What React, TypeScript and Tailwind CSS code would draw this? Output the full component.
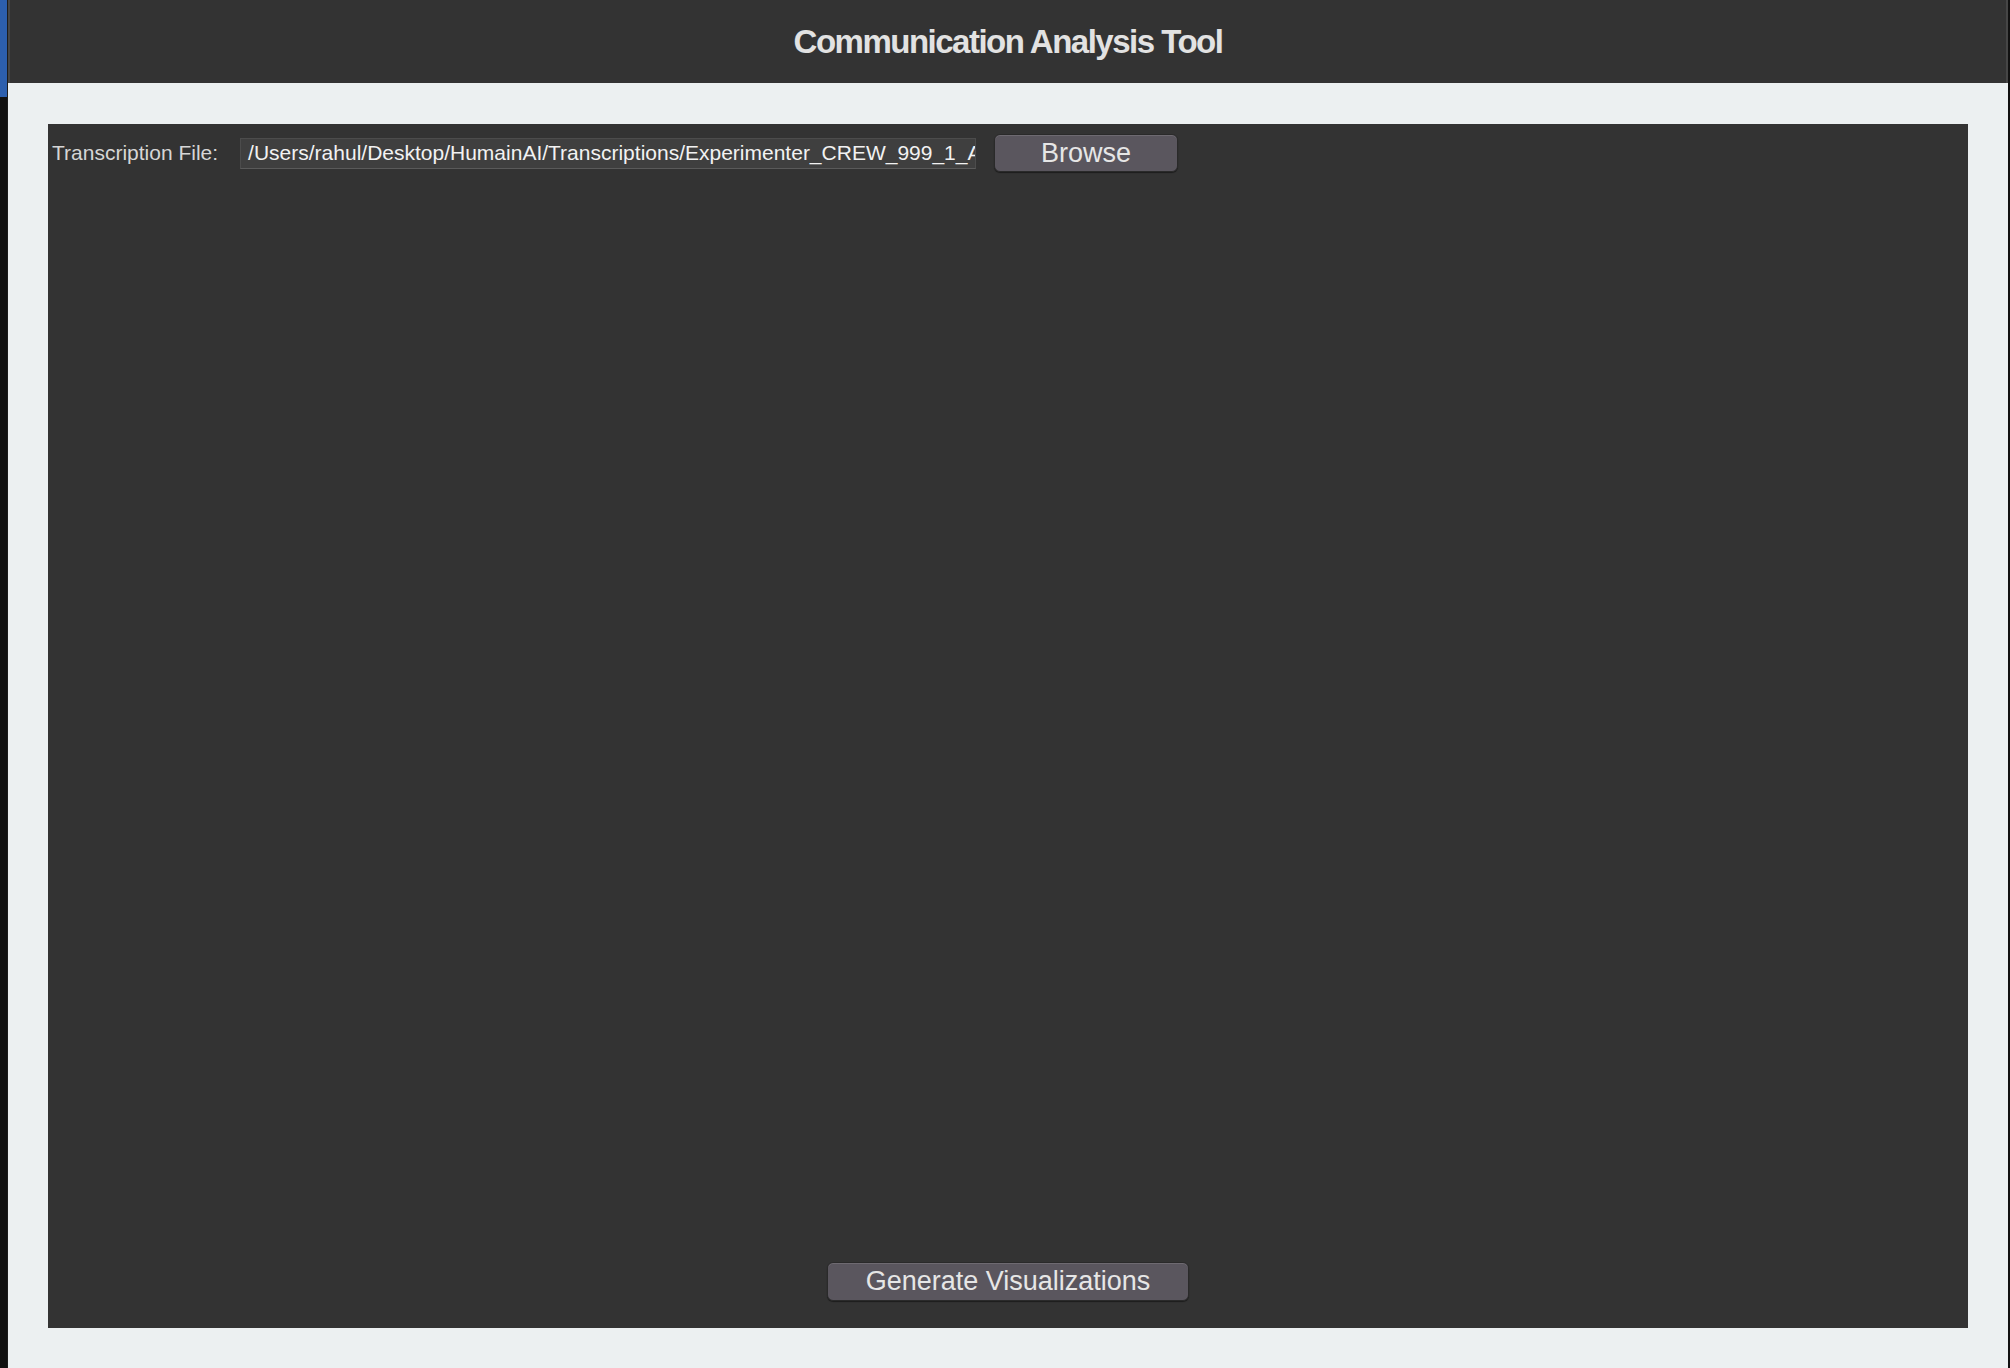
import React from "react";

const filePath = "/Users/rahul/Desktop/HumainAI/Transcriptions/Experimenter_CREW_999_1_Audio.txt";

function MacButton({ label, className }: { label: string; className: string }) {
  return (
    <button
      className={`flex items-center justify-center rounded-[6px] border border-[#2a2a2a] bg-[#5a565e] text-[27px] leading-none text-[#e6e6e6] shadow-[inset_0_1px_0_rgba(255,255,255,0.12),0_1px_1px_rgba(0,0,0,0.45)] ${className}`}
      style={{ fontFamily: '"Liberation Sans", Arial, sans-serif' }}
    >
      {label}
    </button>
  );
}

export default function App() {
  return (
    <div
      className="flex h-[1368px] w-[2010px] overflow-hidden bg-[#111111]"
      style={{ fontFamily: '"Liberation Sans", Arial, sans-serif' }}
    >
      {/* window edge on the left */}
      <div className="flex w-[8px] shrink-0">
        <div className="flex w-[7px] flex-col">
          <div className="h-[97px] bg-[#2c5fae]" />
          <div className="flex-1 bg-[#111111]" />
        </div>
        <div className="w-px bg-[#1c1c1c]" />
      </div>

      <div className="flex w-[2000px] shrink-0 flex-col bg-[#ecf0f1]">
        <header className="flex h-[83px] shrink-0 items-center justify-center border-x-2 border-[#464646] bg-[#333333]">
          <h1 className="text-[33px] font-bold tracking-[-1.5px] text-[#e2e2e2]">
            Communication Analysis Tool
          </h1>
        </header>

        <main className="flex flex-1 px-[40px] pt-[41px] pb-[40px]">
          <section className="flex flex-1 flex-col bg-[#333333] pt-[10px] pb-[27px] pl-[4px]">
            <div className="flex items-center">
              <label className="text-[21px] text-[#d6d6d6]">Transcription File:</label>
              <div className="ml-[22px] flex h-[31px] w-[736px] items-center overflow-hidden border border-[#4c4c4c] border-b-[#5a5a5a] bg-[#3f3f3f] pl-[7px] pr-[8px]">
                <span className="whitespace-nowrap text-[21px] text-[#f2f2f2]">{filePath}</span>
              </div>
              <MacButton label="Browse" className="ml-[18px] h-[38px] w-[184px]" />
            </div>

            <div className="flex-1" />

            <div className="flex justify-center pr-[4px]">
              <MacButton label="Generate Visualizations" className="h-[39px] w-[362px]" />
            </div>
          </section>
        </main>
      </div>

      <div className="w-[2px] shrink-0 bg-[#111111]" />
    </div>
  );
}
